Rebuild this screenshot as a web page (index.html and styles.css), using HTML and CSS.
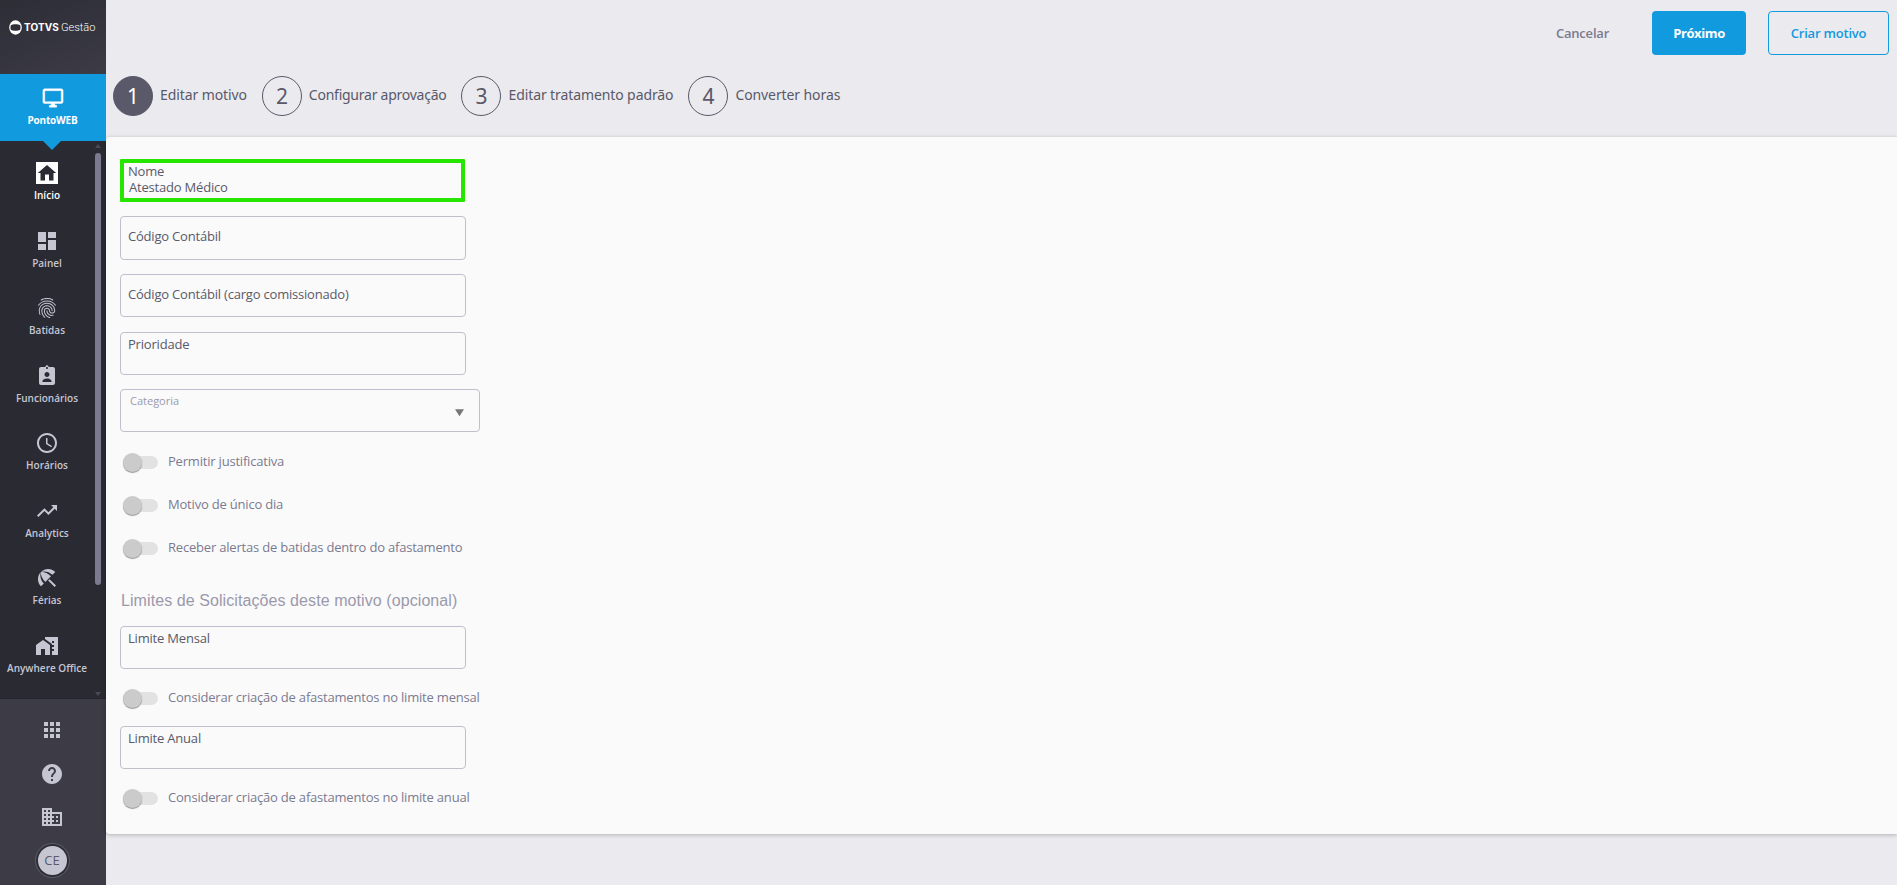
FILE: index.html
```
<!DOCTYPE html>
<html lang="pt-BR">
<head>
  <meta charset="UTF-8" />
  <title>PontoWEB - Editar motivo</title>
  <link rel="stylesheet" href="styles.css">
</head>
<body>

  <!-- Menu lateral -->
  <aside class="sidebar">
    <div class="logo">
      <svg class="logo-icon" width="13" height="15" viewBox="0 0 13 15">
        <ellipse cx="6.500" cy="7.500" rx="6.300" ry="7.200" fill="#fff"/>
        <path fill="#31303a" d="M1.800 5.200C3 4.500 4.600 4.200 6.500 4.200s3.500.3 4.700 1c.5 1.500.5 3.100 0 4.600-1.200.7-2.800 1-4.700 1s-3.500-.3-4.700-1c-.5-1.500-.5-3.100 0-4.600z"/>
      </svg>
      <span class="logo-totvs">TOTVS</span>
      <span class="logo-gestao">Gestão</span>
    </div>

    <div class="product">
      <svg width="24" height="24" viewBox="0 0 24 24"><path d="M21 2H3c-1.100 0-2 .9-2 2v12c0 1.100.9 2 2 2h7v2H8v2h8v-2h-2v-2h7c1.100 0 2-.9 2-2V4c0-1.100-.9-2-2-2zm0 14H3V4h18v12z"/></svg>
      <span>PontoWEB</span>
    </div>

    <nav class="menu">
      <a class="menu-item active">
        <svg width="24" height="24" viewBox="0 0 24 24"><path fill="#fff" d="M1 1h22v22H1z"/><path class="house" d="M10 19.500v-6h4v6h4.500v-7.500H21.200L12 4 2.800 12h2.700v7.500z"/></svg>
        <span>Início</span>
      </a>
      <a class="menu-item">
        <svg width="24" height="24" viewBox="0 0 24 24"><path d="M3 13h8V3H3v10zm0 8h8v-6H3v6zm10 0h8V11h-8v10zm0-18v6h8V3h-8z"/></svg>
        <span>Painel</span>
      </a>
      <a class="menu-item">
        <svg width="24" height="24" viewBox="0 0 24 24"><path d="M17.810 4.470c-.08 0-.16-.02-.23-.06C15.660 3.420 14 3 12.010 3c-1.980 0-3.860.47-5.570 1.410-.24.13-.54.04-.68-.2-.13-.24-.04-.55.2-.68C7.820 2.520 9.860 2 12.010 2c2.130 0 3.990.47 6.030 1.520.25.13.34.43.21.67-.09.18-.26.28-.44.28zM3.500 9.720c-.1 0-.2-.03-.29-.09-.23-.16-.28-.47-.12-.7.99-1.400 2.250-2.500 3.750-3.270C9.980 4.040 14 4.030 17.150 5.650c1.500.77 2.760 1.860 3.750 3.250.16.22.11.54-.12.7-.23.16-.54.11-.7-.12-.9-1.260-2.040-2.250-3.390-2.940-2.870-1.470-6.540-1.470-9.400.01-1.360.7-2.500 1.700-3.400 2.960-.08.14-.23.21-.39.21zm6.250 12.070c-.13 0-.26-.05-.35-.15-.87-.87-1.340-1.430-2.010-2.640-.69-1.230-1.050-2.730-1.050-4.340 0-2.970 2.540-5.390 5.660-5.390s5.660 2.420 5.660 5.390c0 .28-.22.5-.5.5s-.5-.22-.5-.5c0-2.420-2.090-4.390-4.660-4.390-2.570 0-4.660 1.970-4.660 4.390 0 1.440.32 2.770.93 3.850.64 1.150 1.080 1.640 1.850 2.420.19.2.19.51 0 .71-.11.1-.24.15-.37.15zm7.170-1.850c-1.190 0-2.240-.3-3.100-.89-1.490-1.010-2.380-2.650-2.380-4.390 0-.28.22-.5.5-.5s.5.22.5.5c0 1.410.72 2.740 1.940 3.560.71.48 1.540.71 2.540.71.24 0 .64-.03 1.040-.1.270-.05.53.13.58.41.05.27-.13.53-.41.58-.57.11-1.070.12-1.210.12zM14.910 22c-.04 0-.09-.01-.13-.02-1.590-.44-2.630-1.030-3.720-2.100-1.400-1.390-2.170-3.240-2.170-5.220 0-1.620 1.380-2.940 3.080-2.940 1.700 0 3.080 1.320 3.080 2.940 0 1.070.93 1.940 2.080 1.940s2.080-.87 2.080-1.940c0-3.770-3.250-6.830-7.250-6.830-2.840 0-5.440 1.580-6.610 4.030-.39.81-.59 1.760-.59 2.800 0 .78.07 2.010.67 3.610.1.26-.03.55-.29.64-.26.1-.55-.04-.64-.29-.49-1.310-.73-2.610-.73-3.960 0-1.200.23-2.290.68-3.240 1.330-2.790 4.280-4.600 7.510-4.600 4.550 0 8.250 3.510 8.250 7.830 0 1.620-1.380 2.940-3.080 2.940s-3.080-1.320-3.080-2.940c0-1.070-.93-1.940-2.080-1.940s-2.080.87-2.080 1.940c0 1.710.66 3.310 1.870 4.510.95.94 1.860 1.460 3.270 1.850.27.07.42.35.35.61-.05.23-.26.38-.47.38z"/></svg>
        <span>Batidas</span>
      </a>
      <a class="menu-item">
        <svg width="24" height="24" viewBox="0 0 24 24"><path d="M18 3h-4.180C13.400 1.840 12.300 1 11 1h2c-1.300 0-2.400.84-2.820 2H6c-1.100 0-2 .9-2 2v14c0 1.100.9 2 2 2h12c1.100 0 2-.9 2-2V5c0-1.100-.9-2-2-2zm-6 0c.55 0 1 .45 1 1s-.45 1-1 1-1-.45-1-1 .45-1 1-1zm0 5c1.380 0 2.500 1.120 2.500 2.500S13.380 13 12 13s-2.500-1.120-2.500-2.500S10.620 8 12 8zm4.500 10h-9v-1c0-1.660 3-2.500 4.500-2.500s4.500.84 4.500 2.500v1z"/></svg>
        <span>Funcionários</span>
      </a>
      <a class="menu-item">
        <svg width="24" height="24" viewBox="0 0 24 24"><path d="M11.990 2C6.470 2 2 6.480 2 12s4.470 10 9.990 10C17.520 22 22 17.520 22 12S17.520 2 11.990 2zM12 20c-4.420 0-8-3.580-8-8s3.580-8 8-8 8 3.580 8 8-3.580 8-8 8zm.5-13H11v6l5.250 3.150.75-1.230-4.500-2.670z"/></svg>
        <span>Horários</span>
      </a>
      <a class="menu-item">
        <svg width="24" height="24" viewBox="0 0 24 24"><path d="M16 6l2.290 2.290-4.880 4.880-4-4L2 16.590 3.410 18l6-6 4 4 6.300-6.290L22 12V6z"/></svg>
        <span>Analytics</span>
      </a>
      <a class="menu-item">
        <svg width="24" height="24" viewBox="0 0 24 24"><path d="M13.127 14.560l1.430-1.430 6.440 6.443L19.570 21zm4.293-5.730l2.860-2.860c-3.950-3.950-10.350-3.960-14.300-.02 3.930-1.300 8.310-.25 11.440 2.880zM5.950 5.980c-3.940 3.950-3.930 10.350.02 14.300l2.860-2.860C5.700 14.290 4.650 9.910 5.950 5.980zm.02-.02l-.01.01c-.38 3.010 1.170 6.880 4.300 10.020l5.730-5.730c-3.130-3.130-7.010-4.680-10.020-4.300z"/></svg>
        <span>Férias</span>
      </a>
      <a class="menu-item">
        <svg width="24" height="24" viewBox="0 0 24 24"><path d="M1 11v10h5v-6h4v6h5V11L8 6z"/><path d="M10 3v1.970l7 5V11h2v2h-2v2h2v2h-2v4h6V3H10zm9 6h-2V7h2v2z"/></svg>
        <span>Anywhere Office</span>
      </a>

      <div class="scrollbar">
        <i class="scroll-up"></i>
        <i class="scroll-thumb"></i>
        <i class="scroll-down"></i>
      </div>
    </nav>

    <div class="shortcuts">
      <svg width="24" height="24" viewBox="0 0 24 24"><path d="M4 8h4V4H4v4zm6 12h4v-4h-4v4zm-6 0h4v-4H4v4zm0-6h4v-4H4v4zm6 0h4v-4h-4v4zm6-10v4h4V4h-4zm-6 4h4V4h-4v4zm6 6h4v-4h-4v4zm0 6h4v-4h-4v4z"/></svg>
      <svg width="24" height="24" viewBox="0 0 24 24"><path d="M12 2C6.480 2 2 6.480 2 12s4.480 10 10 10 10-4.480 10-10S17.520 2 12 2zm1 17h-2v-2h2v2zm2.070-7.750l-.9.920C13.450 12.900 13 13.500 13 15h-2v-.5c0-1.100.45-2.100 1.170-2.830l1.240-1.260c.37-.36.59-.86.59-1.410 0-1.100-.9-2-2-2s-2 .9-2 2H8c0-2.210 1.790-4 4-4s4 1.790 4 4c0 .88-.36 1.680-.93 2.250z"/></svg>
      <svg width="24" height="24" viewBox="0 0 24 24"><path d="M12 7V3H2v18h20V7H12zM6 19H4v-2h2v2zm0-4H4v-2h2v2zm0-4H4V9h2v2zm0-4H4V5h2v2zm4 12H8v-2h2v2zm0-4H8v-2h2v2zm0-4H8V9h2v2zm0-4H8V5h2v2zm10 12h-8v-2h2v-2h-2v-2h2v-2h-2V9h8v10zm-2-8h-2v2h2v-2zm0 4h-2v2h2v-2z"/></svg>
      <div class="avatar">CE</div>
    </div>
  </aside>

  <main class="content">
    <header class="actions">
      <button class="btn btn-link">Cancelar</button>
      <button class="btn btn-primary">Próximo</button>
      <button class="btn btn-outline">Criar motivo</button>
    </header>

    <!-- Etapas -->
    <div class="steps">
      <div class="step current"><span class="num">1</span><span class="step-name">Editar motivo</span></div>
      <div class="step"><span class="num">2</span><span class="step-name">Configurar aprovação</span></div>
      <div class="step"><span class="num">3</span><span class="step-name">Editar tratamento padrão</span></div>
      <div class="step"><span class="num">4</span><span class="step-name">Converter horas</span></div>
    </div>

    <section class="panel">
      <div class="field nome">
        <label>Nome</label>
        <div class="valor">Atestado Médico</div>
      </div>
      <div class="field vazio"><label>Código Contábil</label></div>
      <div class="field vazio"><label>Código Contábil (cargo comissionado)</label></div>
      <div class="field"><label>Prioridade</label></div>
      <div class="field select"><label>Categoria</label><i class="seta"></i></div>

      <div class="toggles">
        <div class="toggle"><i class="switch"></i><span>Permitir justificativa</span></div>
        <div class="toggle"><i class="switch"></i><span>Motivo de único dia</span></div>
        <div class="toggle"><i class="switch"></i><span>Receber alertas de batidas dentro do afastamento</span></div>
      </div>

      <h2>Limites de Solicitações deste motivo (opcional)</h2>

      <div class="limite">
        <div class="field"><label>Limite Mensal</label></div>
        <div class="toggle"><i class="switch"></i><span>Considerar criação de afastamentos no limite mensal</span></div>
      </div>
      <div class="limite">
        <div class="field"><label>Limite Anual</label></div>
        <div class="toggle"><i class="switch"></i><span>Considerar criação de afastamentos no limite anual</span></div>
      </div>
    </section>
  </main>

</body>
</html>
```
FILE: styles.css
```
* {
  box-sizing: border-box;
}

body {
  margin: 0;
  display: flex;
  height: 100vh;
  overflow: hidden;
  background-color: #ebeaef;
  font-family: "Open Sans", "Noto Sans", sans-serif;
  font-size: 13px;
  color: #595969;
}

/* Menu lateral */
.sidebar {
  width: 106px;
  flex: none;
  display: flex;
  flex-direction: column;
  background-color: #2a2a33;
}

.logo {
  height: 74px;
  display: flex;
  padding: 20px 0 0 9px;
  background: linear-gradient(160deg, #2d2d36, #3c3b46);
  color: #fff;
  white-space: nowrap;
  line-height: 15px;
}

.logo-icon {
  flex: none;
}

.logo-totvs {
  width: 35px;
  margin-left: 2px;
  font-family: Inter, sans-serif;
  font-size: 10px;
  font-weight: 700;
  letter-spacing: 0.1px;
}

.logo-gestao {
  margin-left: 2px;
  font-family: Roboto, sans-serif;
  font-size: 11px;
  font-weight: 300;
}

.product {
  position: relative;
  height: 67px;
  display: flex;
  flex-direction: column;
  align-items: center;
  padding: 13px 1px 0 0;
  background-color: #129adf;
  color: #fff;
  fill: #fff;
  font-size: 10px;
  font-weight: 700;
  letter-spacing: -0.2px;
}

.product svg {
  width: 22px;
  height: 22px;
  stroke: #fff;
  stroke-width: 0.5;
}

.product span {
  margin-top: 4px;
  line-height: 14px;
}

.product::after {
  content: "";
  position: absolute;
  top: 100%;
  left: 43px;
  border: 9px solid transparent;
  border-top-color: #129adf;
  border-bottom: 0;
}

.menu {
  position: relative;
  height: 558px;
  padding: 20px 12px 0 0;
  border-bottom: 1px solid #24242c;
}

.menu-item {
  height: 67.5px;
  display: flex;
  flex-direction: column;
  align-items: center;
  color: #c6c6d2;
  fill: #c6c6d2;
  font-size: 10px;
  font-weight: 600;
  white-space: nowrap;
}

.menu-item svg {
  flex: none;
}

.menu-item span {
  margin-top: 3px;
  line-height: 14px;
}

.menu-item.active {
  color: #fff;
}

.house {
  fill: #2a2a33;
}

.scrollbar {
  position: absolute;
  top: 0;
  right: 5px;
  bottom: 0;
  width: 6px;
}

.scrollbar i {
  position: absolute;
  left: 0;
}

.scroll-up {
  top: 3px;
  border: 3px solid transparent;
  border-top: 0;
  border-bottom: 4px solid #4a4956;
}

.scroll-thumb {
  top: 12px;
  width: 6px;
  height: 432px;
  border-radius: 3px;
  background-color: #7b7a91;
}

.scroll-down {
  bottom: 2px;
  border: 3px solid transparent;
  border-bottom: 0;
  border-top: 4px solid #4a4956;
}

.shortcuts {
  flex: 1;
  display: flex;
  flex-direction: column;
  align-items: center;
  gap: 19.500px;
  padding: 19px 2px 0 0;
  background-color: #3c3b46;
  fill: #c6c6d2;
}

.shortcuts svg {
  flex: none;
}

.avatar {
  width: 29px;
  height: 29px;
  margin-top: -3px;
  border-radius: 50%;
  background-color: #c6c6d2;
  box-shadow: 0 0 0 2px #2f2e38, 0 0 0 3px #595969;
  color: #595969;
  font-size: 13px;
  line-height: 29px;
  text-align: center;
}

/* Conteudo */
.content {
  flex: 1;
}

.actions {
  height: 66px;
  display: flex;
  justify-content: flex-end;
  align-items: center;
  padding-right: 8px;
}

.btn {
  height: 44px;
  border: 0;
  border-radius: 4px;
  background: none;
  font-family: inherit;
  font-size: 13px;
  font-weight: 600;
  letter-spacing: -0.2px;
  color: #7b7a91;
  cursor: pointer;
}

.btn-link {
  width: 97px;
}

.btn-primary {
  width: 94px;
  margin: 0 22px 0 21px;
  background-color: #129adf;
  color: #fff;
  font-weight: 700;
  letter-spacing: -0.4px;
}

.btn-outline {
  width: 121px;
  border: 1px solid #129adf;
  color: #129adf;
}

.steps {
  height: 71px;
  display: flex;
  align-items: flex-start;
  padding: 10px 0 0 7px;
  font-family: "Noto Sans", sans-serif;
  letter-spacing: -0.1px;
}

.step {
  display: flex;
  margin-right: 15px;
}

.step:nth-child(2) {
  letter-spacing: -0.25px;
}

.num {
  width: 40px;
  height: 40px;
  border: 1px solid #595969;
  border-radius: 50%;
  font-size: 21px;
  line-height: 38px;
  text-align: center;
}

.current .num {
  background-color: #595969;
  color: #fff;
}

.step-name {
  margin-left: 7px;
  font-size: 14px;
  line-height: 38px;
}

.panel {
  height: 697px;
  display: flex;
  flex-direction: column;
  padding: 22px 14px 0;
  border-radius: 4px 0 0 4px;
  background-color: #fafafa;
  box-shadow: 0 1px 4px rgba(0, 0, 0, 0.25);
  letter-spacing: -0.2px;
}

.field {
  flex: none;
  width: 346px;
  height: 43.4px;
  margin-bottom: 14.3px;
  padding: 3px 7px;
  border: 1px solid #c0bfce;
  border-radius: 4px;
  line-height: 16px;
}

.field label {
  display: block;
}

.field.vazio {
  padding-top: 11px;
}

.field.nome {
  width: 345px;
  height: 42.500px;
  margin-bottom: 14.7px;
  padding: 0 4px;
  border: 4px solid #26e600;
  border-radius: 1px;
}

.valor {
  padding-left: 1px;
}

.field.select {
  display: flex;
  justify-content: space-between;
  width: 360px;
  height: 43px;
  padding: 3px 15px 0 9px;
  color: #9a99ab;
  font-size: 11px;
  letter-spacing: 0;
}

.seta {
  width: 9px;
  height: 7px;
  margin-top: 16px;
  background-color: #777;
  clip-path: polygon(0 0, 100% 0, 50% 100%);
}

.toggle {
  height: 43px;
  display: flex;
  align-items: center;
  color: #7b7a91;
  line-height: 16px;
}

.toggle span {
  margin: -3px 0 0 10px;
}

/* a bolinha fica por cima do trilho */
.switch {
  position: relative;
  width: 32px;
  height: 13px;
  margin-left: 6px;
  border-radius: 7px;
  background-color: #e2e2e2;
}

.switch::before {
  content: "";
  position: absolute;
  top: -3px;
  left: -3px;
  width: 19px;
  height: 19px;
  border-radius: 50%;
  background-color: #cbcbcb;
  box-shadow: 0 1px 1px rgba(0, 0, 0, 0.4);
}

.toggles {
  margin-top: -6px;
}

h2 {
  margin: 21px 0 15px 1px;
  font-family: "Liberation Sans", Arial, sans-serif;
  font-size: 16px;
  font-weight: 400;
  letter-spacing: 0.08px;
  line-height: 20px;
  color: #9a99ab;
}

.limite {
  height: 100px;
}

.limite .field {
  height: 43px;
  margin-bottom: 8px;
}

.limite .toggle {
  height: 44px;
}
```
